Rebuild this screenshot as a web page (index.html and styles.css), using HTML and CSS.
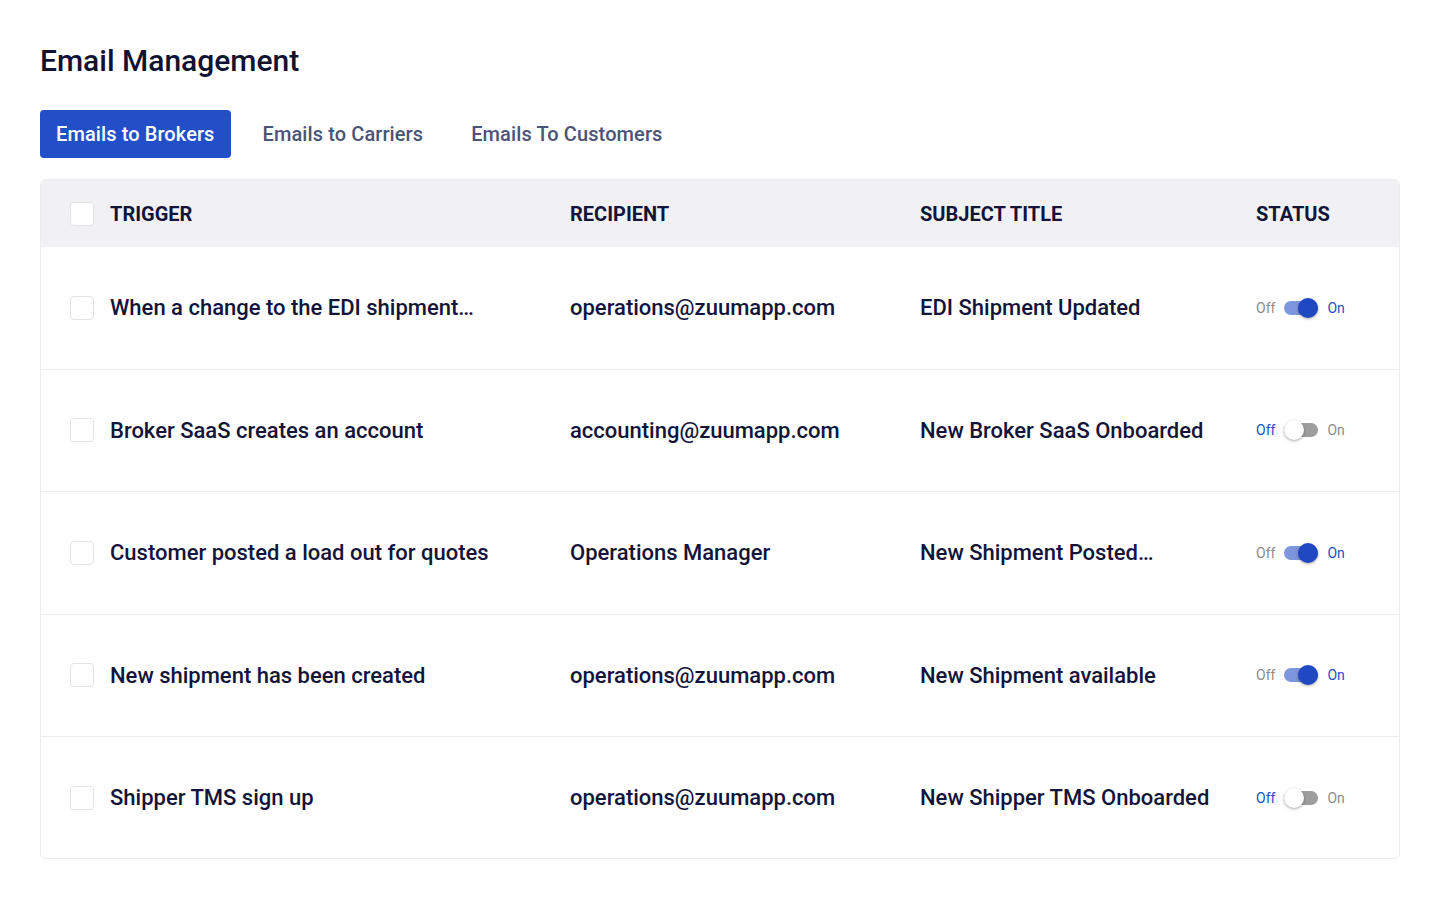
FILE: index.html
```html
<!DOCTYPE html>
<html lang="en">
<head>
<meta charset="utf-8">
<title>Email Management</title>
<link rel="stylesheet" href="styles.css">
</head>
<body>
<main class="page">
  <h1 class="title">Email Management</h1>
  <nav class="tabs">
    <button class="tab active">Emails to Brokers</button>
    <button class="tab">Emails to Carriers</button>
    <button class="tab">Emails To Customers</button>
  </nav>
  <div class="table">
    <div class="row head">
      <span class="check"></span>
      <span class="cell">TRIGGER</span>
      <span class="cell">RECIPIENT</span>
      <span class="cell">SUBJECT TITLE</span>
      <span class="cell">STATUS</span>
    </div>
    <div class="row">
      <span class="check"></span>
      <span class="cell">When a change to the EDI shipment…</span>
      <span class="cell">operations@zuumapp.com</span>
      <span class="cell">EDI Shipment Updated</span>
      <span class="status on"><span class="lbl off-l">Off</span><span class="switch"><span class="track"></span><span class="knob"></span></span><span class="lbl on-l">On</span></span>
    </div>
    <div class="row">
      <span class="check"></span>
      <span class="cell">Broker SaaS creates an account</span>
      <span class="cell">accounting@zuumapp.com</span>
      <span class="cell">New Broker SaaS Onboarded</span>
      <span class="status off"><span class="lbl off-l">Off</span><span class="switch"><span class="track"></span><span class="knob"></span></span><span class="lbl on-l">On</span></span>
    </div>
    <div class="row">
      <span class="check"></span>
      <span class="cell">Customer posted a load out for quotes</span>
      <span class="cell">Operations Manager</span>
      <span class="cell">New Shipment Posted…</span>
      <span class="status on"><span class="lbl off-l">Off</span><span class="switch"><span class="track"></span><span class="knob"></span></span><span class="lbl on-l">On</span></span>
    </div>
    <div class="row">
      <span class="check"></span>
      <span class="cell">New shipment has been created</span>
      <span class="cell">operations@zuumapp.com</span>
      <span class="cell">New Shipment available</span>
      <span class="status on"><span class="lbl off-l">Off</span><span class="switch"><span class="track"></span><span class="knob"></span></span><span class="lbl on-l">On</span></span>
    </div>
    <div class="row last">
      <span class="check"></span>
      <span class="cell">Shipper TMS sign up</span>
      <span class="cell">operations@zuumapp.com</span>
      <span class="cell">New Shipper TMS Onboarded</span>
      <span class="status off"><span class="lbl off-l">Off</span><span class="switch"><span class="track"></span><span class="knob"></span></span><span class="lbl on-l">On</span></span>
    </div>
  </div>
</main>
</body>
</html>
```

FILE: styles.css
```css
* { box-sizing: border-box; }
html, body { margin: 0; padding: 0; background: #ffffff; }
body {
  font-family: Roboto, "Liberation Sans", Arial, sans-serif;
  color: #12143a;
}
.page {
  padding: 40px 40px 0 40px;
}
.title {
  margin: 0;
  font-size: 30px;
  font-weight: 500;
  line-height: 42px;
  color: #0f1233;
}
.tabs {
  display: flex;
  gap: 16px;
  margin-top: 28px;
}
.tab {
  height: 48px;
  padding: 0 16px;
  border: none;
  border-radius: 4px;
  background: transparent;
  font-family: inherit;
  font-size: 20px;
  font-weight: 500;
  letter-spacing: 0.1px;
  color: #4b5377;
  cursor: pointer;
}
.tab.active {
  background: #224fc8;
  color: #ffffff;
}
.table {
  margin-top: 21px;
  border: 1px solid #ececf0;
  border-radius: 6px;
  overflow: hidden;
}
.row {
  display: grid;
  grid-template-columns: 40px 460px 350px 336px 1fr;
  align-items: center;
  padding-left: 29px;
  height: 122.5px;
  border-bottom: 1px solid #ececf0;
  font-size: 22px;
  font-weight: 500;
  color: #12143a;
}
.row.last { border-bottom: none; height: 121px; }
.row.head {
  height: 67px;
  background: #f1f1f4;
  border-bottom: none;
  font-size: 20px;
  font-weight: 700;
  color: #12143a;
}
.check {
  width: 24px;
  height: 24px;
  border: 1.5px solid #e3e3e7;
  border-radius: 4px;
  background: #ffffff;
}
.cell { white-space: nowrap; }
.status {
  display: flex;
  align-items: center;
}
.lbl {
  font-size: 14px;
  font-weight: 400;
  color: #8c8c8c;
}
.switch {
  position: relative;
  width: 36px;
  height: 22px;
  margin: 0 8px 0 8px;
  display: inline-block;
}
.track {
  position: absolute;
  left: 1px;
  top: 4px;
  width: 34px;
  height: 14px;
  border-radius: 7px;
  background: #9e9e9e;
}
.knob {
  position: absolute;
  top: 1px;
  left: 1px;
  width: 20px;
  height: 20px;
  border-radius: 50%;
  background: #ffffff;
  box-shadow: 0 1px 3px rgba(0,0,0,0.35);
}
.status.on .track { background: #7e96de; }
.status.on .knob { left: 15px; background: #1f48c2; }
.status.on .on-l { color: #2350c8; }
.status.off .off-l { color: #2350c8; }
```
